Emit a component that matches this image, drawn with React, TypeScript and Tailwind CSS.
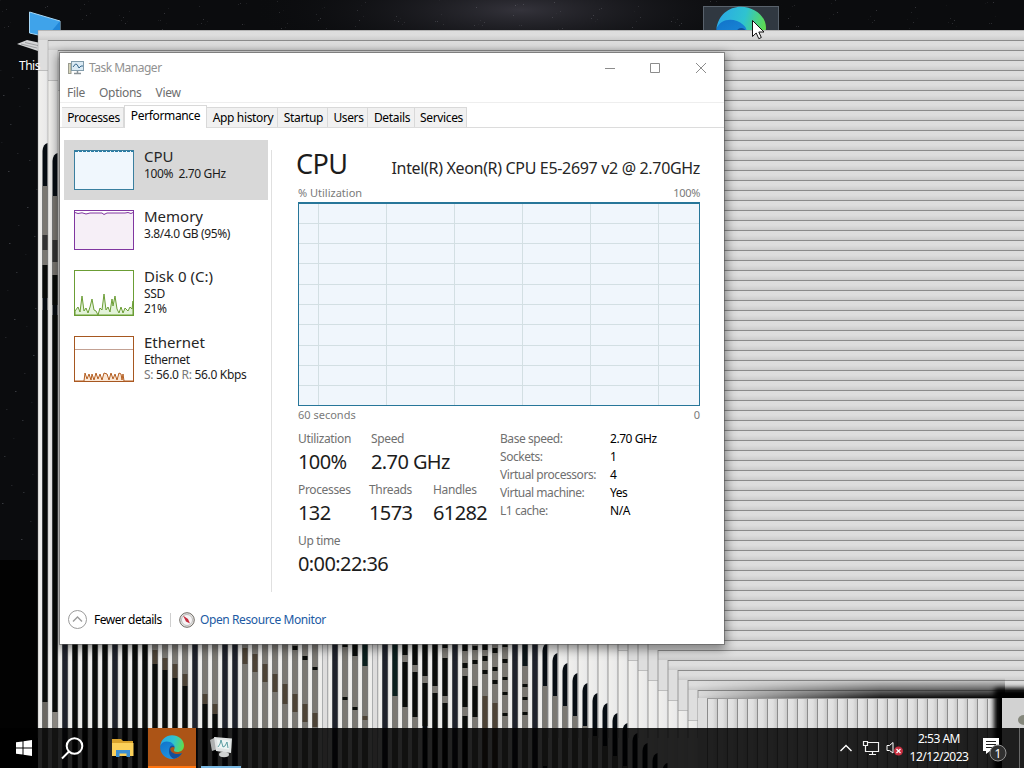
import type { ReactNode } from "react";

const range = (n: number) => Array.from({ length: n }, (_, i) => i);

const tabs = [
  { name: "Processes", width: "w-[62px]" },
  { name: "Performance", width: "w-[83px]" },
  { name: "App history", width: "w-[71px]" },
  { name: "Startup", width: "w-[50px]" },
  { name: "Users", width: "w-[40px]" },
  { name: "Details", width: "w-[47px]" },
  { name: "Services", width: "w-[52px]" },
];

const specs = [
  ["Base speed:", "2.70 GHz"],
  ["Sockets:", "1"],
  ["Virtual processors:", "4"],
  ["Virtual machine:", "Yes"],
  ["L1 cache:", "N/A"],
];

const K = "#090b09";
const N = "#1f222b";
const G = "#7b7872";
const B = "#4d4336";

// slices of the dragged window's content: x, then [from, to, colour]
const slices: [number, [number, number, string][]][] = [
  [42, [[235, 250, "#333"], [265, 298, K], [310, 702, K], [702, 728, "#6b6862"]]],
  [52, [[240, 262, "#333"], [275, 305, K], [315, 712, K], [712, 728, "#8a8680"]]],
  [62, [[640, 728, N]]],
  [72, [[640, 728, K]]],
  [82, [[640, 728, K]]],
  [92, [[640, 728, K]]],
  [102, [[640, 728, K]]],
  [112, [[640, 728, N]]],
  [122, [[640, 728, K]]],
  [132, [[640, 728, K]]],
  [142, [[640, 728, K]]],
  [152, [[640, 650, G], [650, 664, B], [664, 728, K]]],
  [162, [[640, 658, G], [658, 670, B], [670, 728, K]]],
  [172, [[640, 664, G], [664, 678, B], [678, 728, K]]],
  [182, [[640, 674, G], [674, 686, B], [686, 728, K]]],
  [192, [[640, 728, N]]],
  [202, [[640, 694, G], [694, 704, B], [704, 728, K]]],
  [212, [[640, 704, G], [704, 714, B], [714, 728, K]]],
  [222, [[640, 728, N]]],
  [232, [[640, 728, N]]],
  [242, [[640, 648, G], [648, 664, B], [664, 728, G]]],
  [252, [[640, 654, G], [654, 672, B], [672, 728, G]]],
  [262, [[640, 664, G], [664, 682, B], [682, 728, G]]],
  [272, [[640, 674, G], [674, 692, B], [692, 728, G]]],
  [282, [[640, 684, G], [684, 704, B], [704, 728, G]]],
  [292, [[640, 728, G], [646, 650, K], [694, 712, B]]],
  [302, [[640, 728, G], [656, 660, K], [704, 722, B]]],
  [312, [[640, 728, G], [667, 670, K], [713, 727, B]]],
  [322, [[640, 728, "#dedddd"]]],
  [332, [[640, 728, N]]],
  [342, [[640, 728, G], [644, 647, K], [697, 700, K]]],
  [352, [[640, 656, K], [656, 728, G], [707, 710, K]]],
  [362, [[640, 666, "#0b1f1d"], [666, 728, G], [716, 720, B]]],
  [372, [[640, 728, "#dedddd"]]],
  [382, [[640, 728, N]]],
  [392, [[640, 696, "#0b1f1d"], [696, 728, G]]],
  [402, [[640, 655, K], [655, 662, G], [662, 707, K], [707, 728, G]]],
  [412, [[640, 665, K], [665, 672, G], [672, 717, K], [717, 728, G]]],
  [422, [[640, 676, K], [676, 683, G], [683, 726, K]]],
  [432, [[640, 648, K], [648, 686, K], [686, 693, G], [693, 728, K]]],
  [442, [[640, 648, K], [648, 658, G], [658, 696, K], [696, 703, G], [703, 728, K]]],
  [452, [[640, 728, N]]],
  [462, [[640, 728, G], [640, 651, K], [663, 668, K], [676, 707, K], [716, 728, K]]],
  [472, [[640, 728, G], [646, 650, K], [660, 664, K], [686, 717, K]]],
  [482, [[640, 728, G], [644, 650, K], [656, 661, K], [670, 674, K], [696, 728, B]]],
  [492, [[640, 728, G], [648, 653, K], [667, 671, K], [680, 684, K], [703, 728, B]]],
  [502, [[640, 728, G], [643, 647, K], [659, 663, K], [677, 680, K], [692, 695, K], [713, 716, K]]],
  [512, [[640, 728, N]]],
  [522, [[640, 666, "#0c1518"], [666, 728, G], [684, 687, K], [697, 700, K], [712, 715, K]]],
  [532, [[640, 728, N]]],
];

function Desktop() {
  return (
    <svg className="absolute inset-0" width="1024" height="768" viewBox="0 0 1024 768">
      <defs>
        <radialGradient id="sky">
          <stop offset="0" stopColor="#34333b" />
          <stop offset="1" stopColor="#0b0c0f" stopOpacity="0" />
        </radialGradient>
        <linearGradient id="strip" x1="0" y1="0" x2="0" y2="1">
          <stop offset="0" stopColor="#dcdcdc" />
          <stop offset="0.5" stopColor="#dedede" />
          <stop offset="1" stopColor="#cccccc" />
        </linearGradient>
        <linearGradient id="slat" x1="0" y1="0" x2="1" y2="0">
          <stop offset="0" stopColor="#e4e4e4" />
          <stop offset="0.6" stopColor="#dfdfdf" />
          <stop offset="1" stopColor="#c9c9c9" />
        </linearGradient>
        <linearGradient id="edge" x1="0" y1="0" x2="1" y2="0">
          <stop offset="0" stopColor="#f1f0ed" />
          <stop offset="0.8" stopColor="#eaeaea" />
          <stop offset="1" stopColor="#dcdcdc" />
        </linearGradient>
        <linearGradient id="fadeIn" x1="0" y1="0" x2="1" y2="0">
          <stop offset="0" stopColor="#fff" stopOpacity="0" />
          <stop offset="0.6" stopColor="#fff" stopOpacity="0.9" />
          <stop offset="1" stopColor="#fff" />
        </linearGradient>
        <mask id="shadowMask">
          <rect x="695" y="670" width="310" height="30" fill="url(#fadeIn)" />
        </mask>
        <linearGradient id="shadowDown" x1="0" y1="0" x2="0" y2="1">
          <stop offset="0" stopColor="#000" stopOpacity="0" />
          <stop offset="0.55" stopColor="#000" stopOpacity="0.5" />
          <stop offset="1" stopColor="#000" />
        </linearGradient>
        <filter id="soft" x="-50%" y="-50%" width="200%" height="200%">
          <feGaussianBlur stdDeviation="2.5" />
        </filter>
      </defs>

      <rect width="1024" height="768" fill="#0b0c0e" />
      <rect y="560" width="60" height="208" fill="#020202" />
      <ellipse cx="520" cy="10" rx="270" ry="60" fill="url(#sky)" />
      {range(150).map((i) => (
        <rect
          key={i}
          x={(i * 197) % 1024}
          y={(i * 53 + ((i * i) % 17)) % 30}
          width="1"
          height="1"
          fill="#a4a3ad"
          opacity={0.06 + (i % 5) * 0.05}
        />
      ))}
      {range(36).map((i) => (
        <rect
          key={i}
          x={(i * 17) % 37}
          y={70 + ((i * 83) % 480)}
          width="1.5"
          height="1"
          fill="#8d929c"
          opacity={0.1 + (i % 4) * 0.08}
        />
      ))}

      <path d="M29.5 12 L60 21 V40 L29.5 33Z" fill="#3fa3ea" stroke="#a7d8f7" />
      <path d="M44 40 L60 21 V40Z" fill="#2187d8" />
      <path d="M17 44 L27 40 L45 44 L38 51Z" fill="#d4d5d6" />
      <path d="M21 44 L37 48 M25 42.500 L40 46" stroke="#8f9193" strokeWidth="0.8" />

      <rect x="703.500" y="6.500" width="75" height="40" fill="#303841" stroke="#59626c" />
      <svg x="716" y="6" width="50" height="50" viewBox="0 0 24 24">
        <EdgeShape id="desk" />
      </svg>

      {/* trail left by the dragged window */}
      {range(67).map((i) => {
        const x = 38 + i * 10;
        const y = 30 + i * 10;
        return (
          <g key={i}>
            <rect x={x} y={y} width={1024 - x} height="10" fill="url(#strip)" />
            <rect x={x} y={y + 10} width="10" height="30" fill="#dedede" />
            <rect x={x} y={y + 40} width="10" height={Math.max(0, 728 - y)} fill="url(#edge)" />
            <rect x={x} y={y + 40} width="10" height="1" fill="#bdbdbd" />
            <rect x={x} y={y} width={1024 - x} height="1" fill={i ? "#8b8b8b" : "#b5b5b5"} />
            <rect x={x - 0.5} y={y} width="1" height={738 - y} fill="#8f8f8f" opacity={i > 50 ? 0.9 : 0.4} />
            <path
              d={`M${x + 4.5} 768 V${y + 121} Q${x + 5} ${y + 114} ${x + 9.5} ${y + 113} V768Z`}
              fill="#060c12"
            />
            <rect x={x + 4.5} y={y + 156} width="5" height="80" fill={G} />
          </g>
        );
      })}
      <rect x="698" y="698" width="326" height="70" fill="#ddd" />
      {slices.map(([x, parts]) =>
        parts.map(([from, to, fill]) => (
          <rect
            key={`${x}-${from}-${fill}`}
            x={x + 0.5}
            y={from}
            width="5"
            height={(to === 728 ? 768 : to) - from}
            fill={fill}
          />
        ))
      )}

      <rect x="695" y="678" width="310" height="20" fill="url(#shadowDown)" mask="url(#shadowMask)" />
      {range(30).map((i) => (
        <g key={i}>
          <rect x={707 + i * 10} y="698" width="10" height="70" fill="url(#slat)" />
          <rect x={707 + i * 10} y="698" width="1" height="70" fill="#8c8c8c" />
          <rect x={707 + i * 10} y="698" width="10" height="1" fill="#999" />
        </g>
      ))}
      <rect x="994" y="688" width="70" height="100" rx="4" filter="url(#soft)" />
      <rect x="1002" y="698" width="22" height="70" fill="#d2d2d2" />
      <ellipse cx="1024" cy="720" rx="6" ry="5" fill="#85877c" />
    </svg>
  );
}

function EdgeShape({ id }: { id: string }) {
  return (
    <>
      <defs>
        <linearGradient id={`${id}-a`} x1="0" y1="0.3" x2="1" y2="0.5">
          <stop offset="0" stopColor="#2aa9e6" />
          <stop offset="0.55" stopColor="#2fc3d0" />
          <stop offset="1" stopColor="#5fdc4e" />
        </linearGradient>
        <linearGradient id={`${id}-b`} x1="0" y1="0" x2="0.6" y2="1">
          <stop offset="0" stopColor="#1173c9" />
          <stop offset="1" stopColor="#2196e3" />
        </linearGradient>
      </defs>
      <path
        d="M0.200 11 C1 4.500 6 0.300 12 0.300 C18.500 0.300 24 5 24 10.500 C24 15 20.500 17 17.500 17 C15 17 13.600 16.200 14 15 C15 13.500 14.800 11.500 13 10 C10 7.500 3 7 0.200 11Z"
        fill={`url(#${id}-a)`}
      />
      <path
        d="M0.200 11 C2 5.800 9 5.300 13 9 C14.200 10 14.700 11 14.700 12 C12.500 10.600 10.400 11.800 9.800 13.500 C10.200 18.500 15.500 21.500 21.800 18.300 C19.600 22 16 24 12 24 C5 24 -0.500 18 0.200 11Z"
        fill={`url(#${id}-b)`}
      />
      <path
        d="M10.500 11.200 C7.600 15 9 22.500 14 23.700 C17.500 23.300 20.500 21 22.200 18 C17 20.500 11 18.500 10.200 14 C10.600 12.500 12.500 11 14.500 12.500 C14 10.600 12 10 10.500 11.200Z"
        fill="#124f99"
      />
    </>
  );
}

function MonitorIcon() {
  return (
    <svg width="17" height="16" viewBox="0 0 17 16">
      <rect x="0.500" y="3.500" width="2.500" height="10" fill="#d6d5ba" stroke="#9b9c90" />
      <rect x="3.500" y="1.500" width="12" height="9" fill="#dbeaf4" stroke="#829cab" />
      <path d="M5 7 L7.500 4 L9 4.500 L11 8 L13 6 H15" fill="none" stroke="#35678b" />
      <path d="M9.500 11 V13 M6 13.500 H13" stroke="#8a9297" strokeWidth="1.500" />
    </svg>
  );
}

function Thumb({ height, stroke, children }: { height: number; stroke: string; children: ReactNode }) {
  return (
    <svg className="block shrink-0" width="60" height={height} viewBox={`0 0 60 ${height}`}>
      <rect x="0.500" y="0.500" width="59" height={height - 1} fill="#fff" stroke={stroke} />
      {children}
    </svg>
  );
}

function SideItem({ title, lines, thumb, className }: {
  title: string;
  lines: ReactNode[];
  thumb: ReactNode;
  className: string;
}) {
  return (
    <div className={`flex w-[204px] pl-[10px] pt-[10px] ${className}`}>
      {thumb}
      <div className="-mt-[3px] pl-[10px] text-[12px] leading-[15px] tracking-[-0.38px] whitespace-pre text-[#1c1c1c]">
        <div className="mb-px text-[15px] leading-[18px] tracking-[0px] text-[#262626]">{title}</div>
        {lines.map((line, i) => (
          <div key={i}>{line}</div>
        ))}
      </div>
    </div>
  );
}

function Stat({ label, value, className }: { label: string; value: string; className: string }) {
  return (
    <div className={`h-[51px] whitespace-nowrap ${className}`}>
      <div className="text-[12px] leading-4 tracking-[-0.35px] text-[#707070]">{label}</div>
      <div className="-mt-px text-[20px] leading-[31px] tracking-[-0.6px] text-[#1c1c1c]">{value}</div>
    </div>
  );
}

function TaskManager() {
  return (
    <div className="absolute left-[60px] top-[53px] flex h-[591px] w-[664px] flex-col bg-white text-black shadow-[0_0_0_1px_rgba(90,90,90,0.6),0_3px_10px_2px_rgba(0,0,0,0.45)]">
      <div className="flex h-[30px] items-center pl-2 text-[12px] text-[#919191]">
        <MonitorIcon />
        <span className="ml-1 flex-1 tracking-[-0.5px]">Task Manager</span>
        <svg width="120" height="16" viewBox="0 0 120 16" fill="none" stroke="#8c8c8c">
          <path d="M1 8.500 H11 M46.500 3.500 H55.500 V12.500 H46.500Z M92 3 L102 13 M102 3 L92 13" />
        </svg>
      </div>
      <div className="flex h-5 items-center gap-[14px] border-b border-[#eee] pl-[7px] text-[12px] tracking-[-0.3px] text-[#6d6d6d]">
        <span>File</span>
        <span>Options</span>
        <span>View</span>
      </div>
      <div className="flex h-[25px] items-end border-b border-[#dcdcdc] pl-[2px] text-[12px] tracking-[-0.35px]">
        {tabs.map((tab) => (
          <div
            key={tab.name}
            className={`${tab.width} text-center whitespace-nowrap border-[#d9d9d9] ${
              tab.name === "Performance"
                ? "-mb-px h-[23px] border border-b-0 bg-white leading-[20px]"
                : "h-5 border-t border-r bg-[#f1f1f1] pl-[2px] leading-[20px]"
            }`}
          >
            {tab.name}
          </div>
        ))}
      </div>

      <div className="flex h-[464px]">
        <div className="w-[208px] shrink-0 pl-1 pt-[12px]">
          <SideItem
            className="h-[60px] bg-[#d8d8d8]"
            title="CPU"
            lines={["100%  2.70 GHz"]}
            thumb={
              <Thumb height={40} stroke="#3a7f9f">
                <rect x="1" y="1" width="58" height="38" fill="#f0f7fd" />
                <path d="M1 1.500 H59" stroke="#287ba4" strokeWidth="1" strokeDasharray="3 1" />
              </Thumb>
            }
          />
          <SideItem
            className="h-[60px]"
            title="Memory"
            lines={["3.8/4.0 GB (95%)"]}
            thumb={
              <Thumb height={40} stroke="#8036a0">
                <rect x="1" y="3" width="58" height="36" fill="#f6eff7" />
                <path
                  d="M1 2.500 L4 3.500 L8 2.800 L12 4 L16 3 H28 L30 4.500 L33 3 H51 L54 2.500 L57 3.500 L59 2.500"
                  fill="none"
                  stroke="#8036a0"
                />
              </Thumb>
            }
          />
          <SideItem
            className="h-[66px]"
            title="Disk 0 (C:)"
            lines={["SSD", "21%"]}
            thumb={
              <Thumb height={46} stroke="#6b9d35">
                <path
                  d="M1 41 L4 37 L6 42 L8 26 L10 41 L12 38 L14 43 L16 37 L18 29 L20 40 L22 41 L24 45 L26 38 L28 40 L30 24 L32 40 L34 37 L36 42 L38 29 L39 36 L41 26 L43 39 L45 43 L47 37 L49 43 L51 38 L54 41 L56 37 L58 39 L59 31 V45 H1Z"
                  fill="#e3f3d9"
                  stroke="#6b9d35"
                />
              </Thumb>
            }
          />
          <SideItem
            className="h-[66px]"
            title="Ethernet"
            lines={[
              "Ethernet",
              <span key="rate" className="tracking-[-0.3px]">
                <span className="text-[#777]">S:</span> 56.0 <span className="text-[#777]">R:</span> 56.0 Kbps
              </span>,
            ]}
            thumb={
              <Thumb height={46} stroke="#a65720">
                <path d="M1 13.500 H59" stroke="#c3a193" />
                <path
                  d="M1 45 H10 L11 37 L13 43 L15 38 L17 44 L18 38 L20 44 L22 37 L24 43 L26 38 L28 44 L30 37 L33 38 L35 44 L37 37 L39 43 L41 38 L43 44 L45 37 L47 38 L48 44 L49 38 L50 45 H59"
                  fill="#fbe7d5"
                  stroke="#b45f22"
                />
              </Thumb>
            }
          />
        </div>
        <div className="mt-[22px] h-[442px] w-[30px] shrink-0 border-l border-[#e0e0e0] ml-[3px]" />
        <div className="-ml-[3px] w-[402px] pt-[16px]">
          <div className="flex h-[41px] items-baseline justify-between whitespace-nowrap">
            <span className="-ml-[2px] text-[27px] leading-[40px] tracking-[-0.6px] text-[#1c1c1c]">CPU</span>
            <span className="text-[16px] tracking-[-0.33px] text-[#262626]">
              Intel(R) Xeon(R) CPU E5-2697 v2 @ 2.70GHz
            </span>
          </div>
          <div className="flex h-[17px] justify-between text-[11px] leading-4 text-[#7a7a7a]">
            <span>% Utilization</span>
            <span className="tracking-[-0.3px]">100%</span>
          </div>
          <svg className="block" width="402" height="204" viewBox="0 0 402 204">
            <rect x="0.500" y="0.500" width="401" height="203" fill="#f0f6fc" stroke="#277699" />
            <path
              d="M20.500 1 V203 M88.500 1 V203 M156.500 1 V203 M224.500 1 V203 M292.500 1 V203 M360.500 1 V203 M1 21.500 H401 M1 41.500 H401 M1 61.500 H401 M1 82.500 H401 M1 102.500 H401 M1 122.500 H401 M1 143.500 H401 M1 163.500 H401 M1 183.500 H401"
              stroke="#d3dfe3"
            />
            <path d="M0 1 H402" stroke="#277699" strokeWidth="2" />
          </svg>
          <div className="flex h-[25px] justify-between pt-px text-[11px] leading-4 text-[#7a7a7a]">
            <span>60 seconds</span>
            <span>0</span>
          </div>
          <div className="flex">
            <div className="w-[202px]">
              <div className="flex">
                <Stat className="w-[73px]" label="Utilization" value="100%" />
                <Stat className="w-[100px]" label="Speed" value="2.70 GHz" />
              </div>
              <div className="flex">
                <Stat className="w-[71px]" label="Processes" value="132" />
                <Stat className="w-[64px]" label="Threads" value="1573" />
                <Stat className="w-[60px]" label="Handles" value="61282" />
              </div>
              <Stat className="w-[100px]" label="Up time" value="0:00:22:36" />
            </div>
            <div className="-mt-px text-[12px] leading-[18px] tracking-[-0.45px] whitespace-nowrap">
              {specs.map(([label, value]) => (
                <div key={label} className="flex">
                  <span className="w-[110px] text-[#707070]">{label}</span>
                  <span>{value}</span>
                </div>
              ))}
            </div>
          </div>
        </div>
      </div>

      <div className="mt-[5px] flex h-[46px] items-center pl-2 text-[12px] tracking-[-0.4px] whitespace-nowrap">
        <svg width="20" height="20" viewBox="0 0 20 20" fill="none" stroke="#9b9b9b">
          <circle cx="9.500" cy="9.500" r="9" />
          <path d="M5 11.500 L9.500 7 L14 11.500" strokeWidth="1.400" />
        </svg>
        <span className="ml-[6px] w-[76px] tracking-[-0.5px]">Fewer details</span>
        <span className="h-[14px] w-[9px] border-l border-[#cfcfcf]" />
        <svg width="16" height="16" viewBox="0 0 16 16">
          <circle cx="8" cy="8" r="7.300" fill="#e9e9e7" stroke="#6e6963" />
          <circle cx="8" cy="8" r="5.500" fill="#f6f4f5" stroke="#a7a6a6" strokeWidth="0.700" />
          <path d="M4 3.500 L7 9.500 L11 11.500 L9 7Z" fill="#c62b3c" />
        </svg>
        <span className="ml-[5px] text-[#215aa3]">Open Resource Monitor</span>
      </div>
    </div>
  );
}

function Taskbar() {
  return (
    <div className="absolute inset-x-0 bottom-0 flex h-10 items-center bg-black/86 text-white">
      <div className="flex w-[48px] justify-center">
        <svg width="16" height="16" viewBox="0 0 16 16" fill="#fff">
          <path d="M0 2.300 L6.500 1.400 V7.500 H0Z M7.500 1.200 L16 0 V7.500 H7.500Z M0 8.500 H6.500 V14.600 L0 13.700Z M7.500 8.500 H16 V16 L7.500 14.800Z" />
        </svg>
      </div>
      <div className="flex w-[48px] justify-center">
        <svg width="23" height="23" viewBox="0 0 23 23" fill="none" stroke="#fff" strokeWidth="2">
          <circle cx="13.500" cy="9" r="7.800" />
          <path d="M8 14.500 L1 21.500" />
        </svg>
      </div>
      <div className="flex w-[52px] justify-center pl-[2px]">
        <svg width="22" height="20" viewBox="0 0 22 20">
          <path d="M0 1 H9 L11 3 H21 V18 H0Z" fill="#d9a32d" />
          <path d="M0 5 H21.500 V18 H0Z" fill="#fbd05a" />
          <path d="M4 19 V12 H18 V19 H14.500 V15.500 H7.500 V19Z" fill="#3b8fd2" />
        </svg>
      </div>
      <div className="flex h-10 w-12 items-center justify-center border-b-2 border-[#ff7510] bg-[#ac5416]">
        <svg width="24" height="24" viewBox="0 0 24 24">
          <EdgeShape id="bar" />
        </svg>
      </div>
      <div className="ml-[5px] flex h-10 w-10 items-center justify-center border-b-2 border-[#79b8e3]">
        <svg width="23" height="22" viewBox="0 0 23 22">
          <path d="M0 4 L6 1 L8 13 L2 15Z" fill="#aeb0b0" />
          <path d="M4 1 L22 2.500 L21 17 L6 15Z" fill="#e0e3e3" />
          <path d="M7 3.500 L20 4.500 L19 13.500 L8 12Z" fill="#eef5f4" />
          <path d="M8 11 L10 8 L11 4 L13 11 L15 10 L17 6 L18 12" fill="none" stroke="#4e959a" strokeWidth="0.900" />
          <ellipse cx="14" cy="18.500" rx="5" ry="2.700" fill="#d0d2d1" />
        </svg>
      </div>

      <div className="ml-auto flex h-10 items-center">
        <svg width="14" height="12" viewBox="0 0 14 12" fill="none" stroke="#fff" strokeWidth="1.400">
          <path d="M1.500 9 L7 3.500 L12.500 9" />
        </svg>
        <svg className="ml-[9px]" width="18" height="16" viewBox="0 0 18 16" fill="none" stroke="#f2f2f2">
          <path d="M6 2.500 H16.500 V11.500 H3.500 V6 M10.500 12 V14 M7 14.500 H14 M1.500 1.500 H5.500 V5.500 H1.500Z" strokeWidth="1.200" />
        </svg>
        <svg className="ml-[6px]" width="18" height="16" viewBox="0 0 18 16">
          <path d="M1 5.500 H3.500 L7 2.500 V13 L3.500 10.500 H1Z" fill="none" stroke="#fff" />
          <circle cx="12.500" cy="11" r="4.500" fill="#c92f40" />
          <path d="M10.500 9 L14.500 13 M14.500 9 L10.500 13" stroke="#fff" strokeWidth="1.200" />
        </svg>
        <div className="ml-[5px] w-[60px] text-center text-[12px] leading-[18px] tracking-[-0.5px] whitespace-nowrap">
          <div>2:53 AM</div>
          <div>12/12/2023</div>
        </div>
        <svg className="ml-[13px]" width="26" height="28" viewBox="0 0 26 28">
          <path d="M1 4 H17 V17 H8 L4 20 V17 H1Z" fill="#fff" />
          <path d="M4 7.500 H14 M4 10.500 H14 M4 13.500 H11" stroke="#202020" />
          <circle cx="16" cy="19" r="8" fill="#303030" stroke="#929292" />
          <text x="16" y="23.500" fill="#fff" fontSize="12" textAnchor="middle">1</text>
        </svg>
        <div className="ml-[11px] h-10 w-[5px] border-l border-[#696969]" />
      </div>
    </div>
  );
}

export default function App() {
  return (
    <main className="relative h-[768px] w-[1024px] overflow-hidden bg-black font-['Noto_Sans','Open_Sans',sans-serif]">
      <Desktop />
      <div className="absolute left-[19px] top-[58px] text-[12px] leading-4 tracking-[-0.5px] text-white">This</div>
      <TaskManager />
      <Taskbar />
      <svg className="absolute left-[752px] top-[20px]" width="13" height="20" viewBox="0 0 13 20">
        <path
          d="M0.500 0.500 V16.500 L4.200 13 L6.800 18.700 L9.300 17.500 L6.800 12 H12Z"
          fill="#fff"
          stroke="#111"
        />
      </svg>
    </main>
  );
}
